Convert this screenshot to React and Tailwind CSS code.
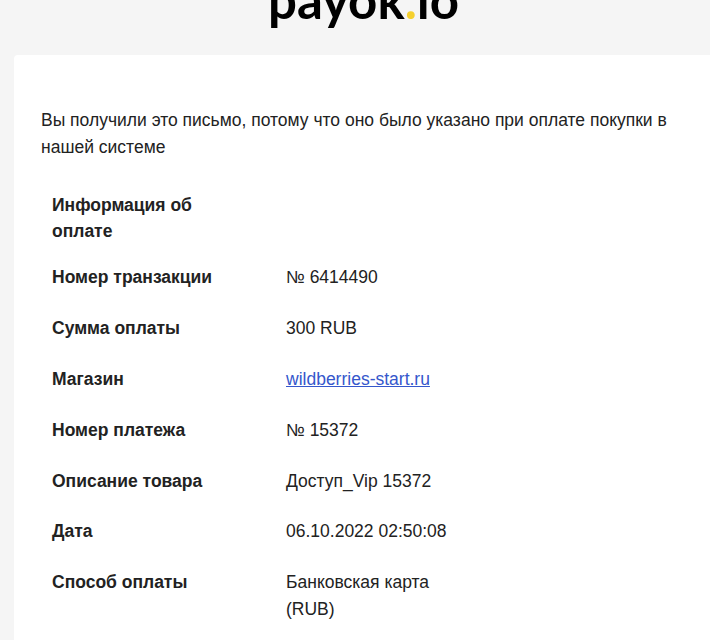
const rows = [
  ['Номер транзакции', '№ 6414490'],
  ['Сумма оплаты', '300 RUB'],
  ['Магазин', <a href="#" className="text-[#3557cc] underline">wildberries-start.ru</a>],
  ['Номер платежа', '№ 15372'],
  ['Описание товара', 'Доступ_Vip 15372'],
  ['Дата', '06.10.2022 02:50:08'],
  ['Способ оплаты', <>Банковская карта<br />(RUB)</>],
]

export default function App() {
  return (
    <div className="h-[640px] overflow-hidden bg-[#f5f5f5] font-['Liberation_Sans',Arial,sans-serif] text-[17.5px] leading-[26.83px] text-[#222222]">
      <div className="flex h-[55px] items-start justify-center">
        <div className="mt-[-26px] ml-[17px] font-['Lato',sans-serif] text-[51px] leading-[51px] font-bold text-black">
          payok<span className="text-[#f5d02f]">.</span>io
        </div>
      </div>
      <div className="ml-[14px] h-full rounded-tl-[4px] bg-white pt-[52px] pr-[32px] pl-[27px]">
        <p>Вы получили это письмо, потому что оно было указано при оплате покупки в нашей системе</p>
        <table className="mt-[19px] w-[480px] table-fixed border-collapse">
          <tbody>
            <tr>
              <td className="w-[245px] pt-[12px] pr-[40px] pb-[7px] pl-[11px] align-top font-bold">Информация об оплате</td>
              <td></td>
            </tr>
            {rows.map(([label, value]) => (
              <tr key={label}>
                <td className="py-[12px] pr-[40px] pl-[11px] align-top font-bold">{label}</td>
                <td className="py-[12px] align-top">{value}</td>
              </tr>
            ))}
          </tbody>
        </table>
      </div>
    </div>
  )
}
